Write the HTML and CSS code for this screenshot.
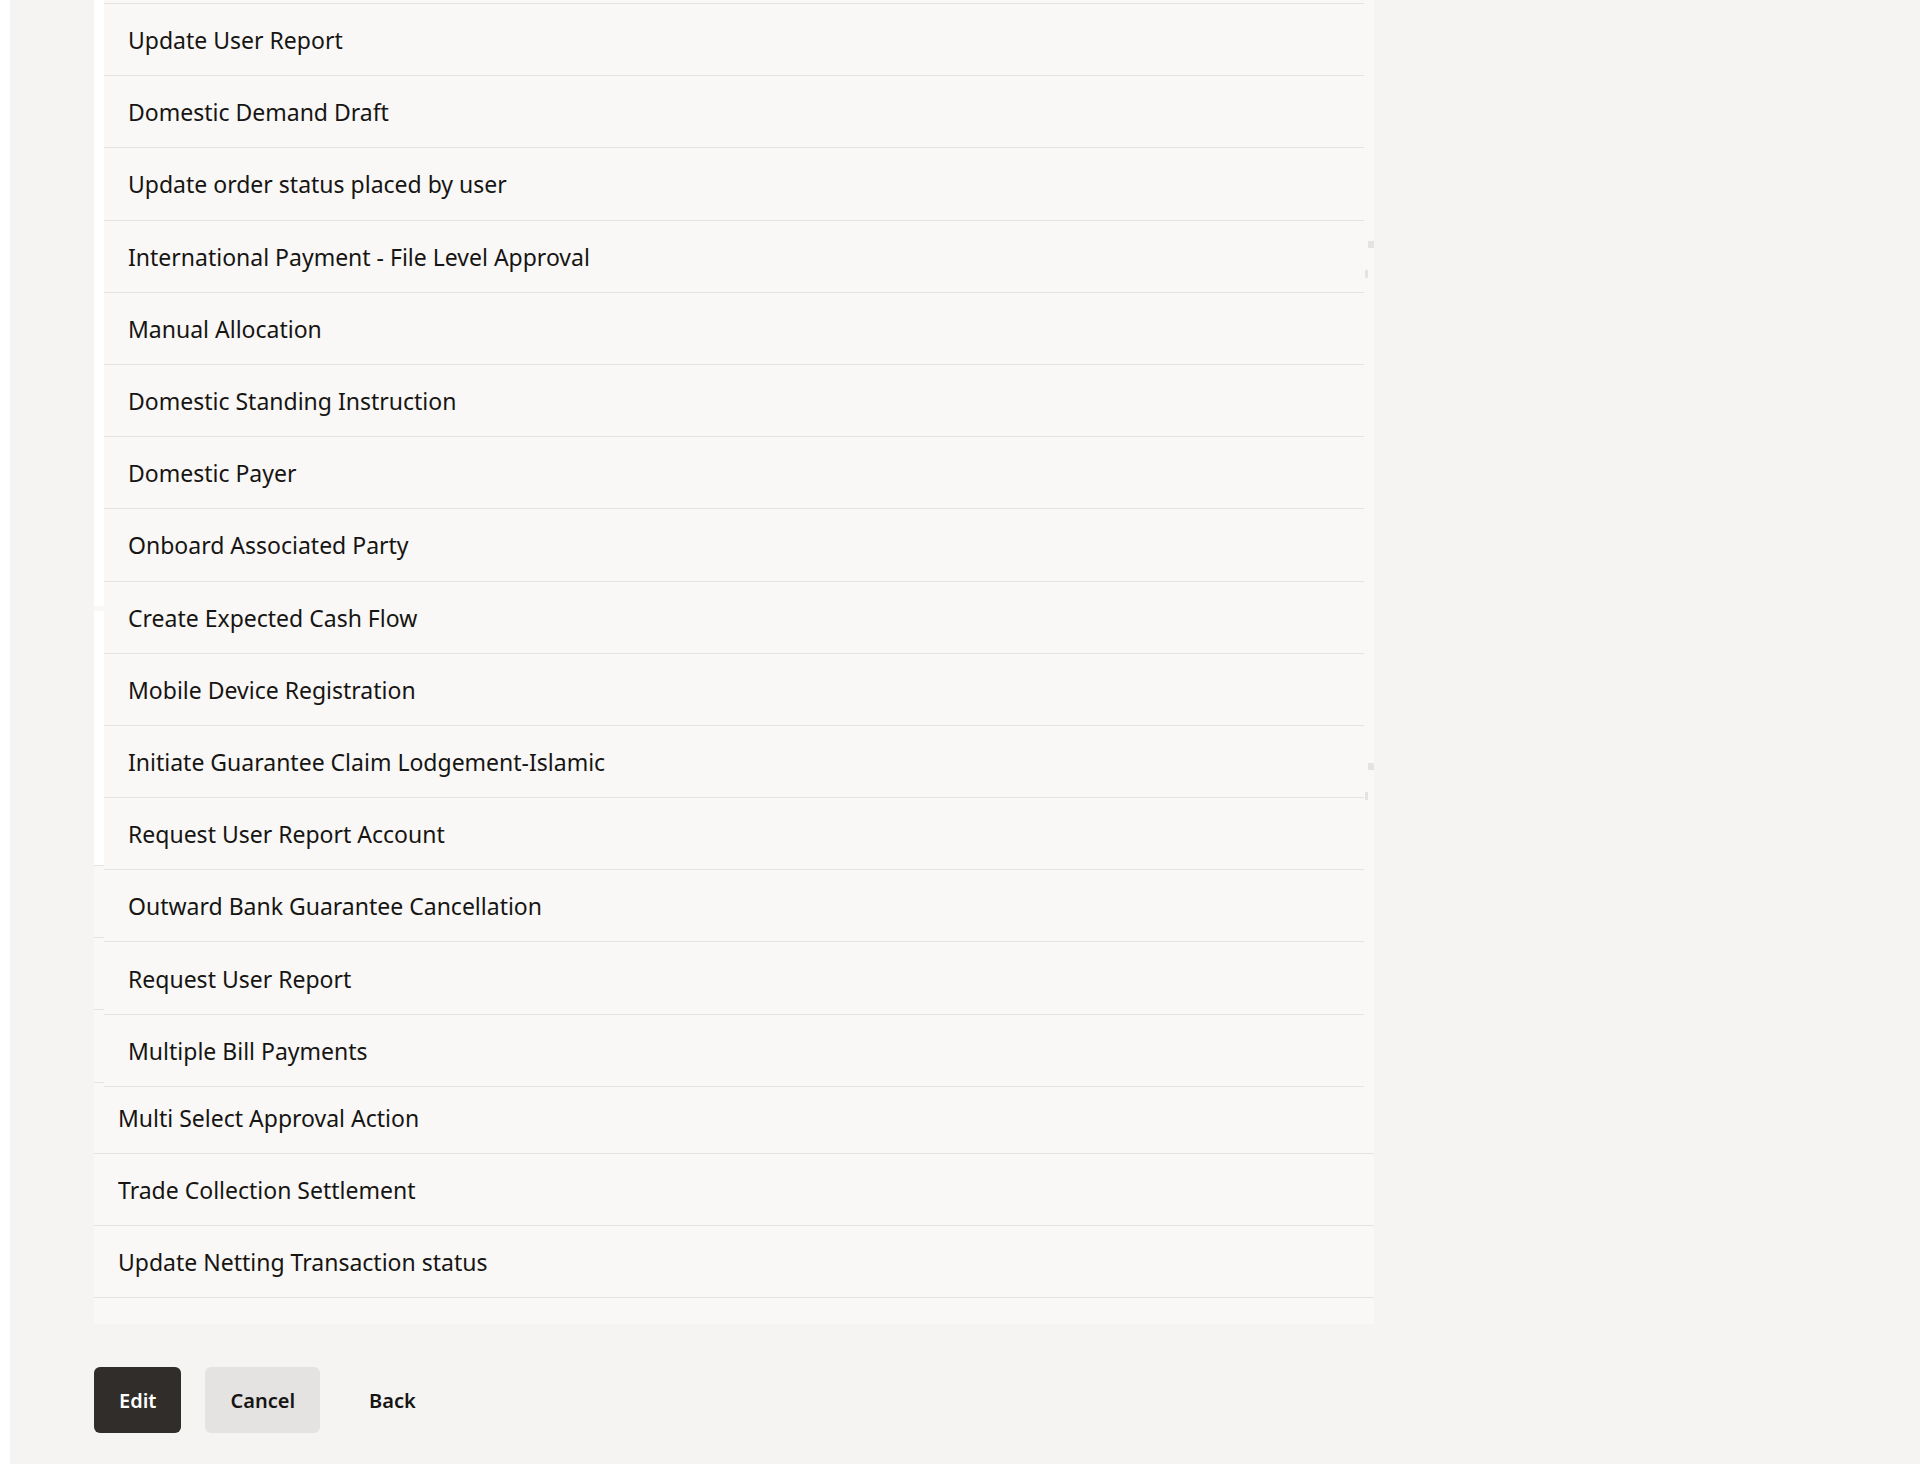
FILE: index.html
```html
<!DOCTYPE html>
<html>
<head>
  <meta name="viewport" content="width=device-width, initial-scale=1">
  <link rel="stylesheet" href="styles.css">
</head>
<body>

  <!-- Main content area -->
  <div class="page">

    <!-- Transaction list panel -->
    <div class="panel">

      <!-- Nested group of transactions -->
      <div class="group">
        <div class="gutter">
          <span class="gap-white g1"></span>
          <span class="gap-band"></span>
          <span class="gap-white g2"></span>
          <span class="gap-seg"></span>
          <span class="gap-seg"></span>
          <span class="gap-seg"></span>
          <span class="gap-seg last"></span>
        </div>

        <ul class="list">
          <li class="row-cut"></li>
          <li class="row">Update User Report</li>
          <li class="row">Domestic Demand Draft</li>
          <li class="row">Update order status placed by user</li>
          <li class="row">International Payment - File Level Approval</li>
          <li class="row">Manual Allocation</li>
          <li class="row">Domestic Standing Instruction</li>
          <li class="row">Domestic Payer</li>
          <li class="row">Onboard Associated Party</li>
          <li class="row">Create Expected Cash Flow</li>
          <li class="row">Mobile Device Registration</li>
          <li class="row">Initiate Guarantee Claim Lodgement-Islamic</li>
          <li class="row">Request User Report Account</li>
          <li class="row">Outward Bank Guarantee Cancellation</li>
          <li class="row">Request User Report</li>
          <li class="row">Multiple Bill Payments</li>
        </ul>

        <!-- scroll markers on the right edge -->
        <div class="rail">
          <span class="mark wide m1"></span>
          <span class="mark thin m2"></span>
          <span class="mark wide m3"></span>
          <span class="mark thin m2"></span>
        </div>
      </div>

      <!-- Top level transactions -->
      <ul class="list outer">
        <li class="row">Multi Select Approval Action</li>
        <li class="row">Trade Collection Settlement</li>
        <li class="row">Update Netting Transaction status</li>
      </ul>
    </div>

    <!-- Actions -->
    <div class="actions">
      <button class="btn btn-primary">Edit</button>
      <button class="btn btn-secondary">Cancel</button>
      <button class="btn btn-link">Back</button>
    </div>

  </div>

</body>
</html>
```

FILE: styles.css
```css
/* =====================
   BASE
   ===================== */
* {
  box-sizing: border-box;
}
body {
  margin: 0;
  background: #fff;
  font-family: "Noto Sans", "Open Sans", sans-serif;
  color: #161513;
}
ul {
  list-style: none;
  margin: 0;
  padding: 0;
}

/* =====================
   PAGE
   ===================== */
.page {
  margin-left: 10px;
  min-height: 100vh;
  padding-left: 84px;
  background: #f5f4f2;
}

.panel {
  width: 1280px;
  background: #f9f8f6;
  padding-bottom: 26px;
}

/* =====================
   NESTED GROUP
   ===================== */
.group {
  position: relative; /* sits above the top level list */
  display: flex;
  background: #f9f8f6;
}

.gutter {
  width: 10px;
  display: flex;
  flex-direction: column;
}
.gutter span {
  display: block;
}
.gap-white {
  background: #fff;
}
.g1 {
  height: 606px;
}
.gap-band {
  height: 5px;
}
.g2 {
  height: 254px;
}
.gap-seg {
  height: 72.2px;
  border-top: 1px solid #e5e3e0;
}
.gap-seg.last {
  height: 6px;
}

.list {
  flex: 1;
}

.row-cut {
  height: 4px;
  border-bottom: 1px solid #e5e3e0;
}

.row {
  height: 72.2px;
  display: flex;
  align-items: center;
  padding: 2px 0 0 24px;
  border-bottom: 1px solid #e5e3e0;
  font-size: 23px;
  line-height: 1;
}

.rail {
  width: 10px;
}
.mark {
  display: block;
  background: #e4e3e1;
}
.mark.wide {
  width: 6px;
  height: 7px;
  margin-left: 4px;
}
.mark.thin {
  width: 3px;
  height: 8px;
  margin-left: 1px;
}
.m1 {
  margin-top: 241px;
}
.m2 {
  margin-top: 22px;
}
.m3 {
  margin-top: 485px;
}

/* =====================
   TOP LEVEL ROWS
   ===================== */
.outer {
  margin-top: -6px; /* first row tucks under the group */
}

/* =====================
   BUTTONS
   ===================== */
.actions {
  display: flex;
  gap: 24px;
  padding-top: 43px;
}
.btn {
  height: 66px;
  padding: 0 25px;
  border: none;
  border-radius: 6px;
  font-family: "Noto Sans", "Open Sans", sans-serif;
  font-size: 20px;
  font-weight: 600;
  cursor: pointer;
}
.btn-primary {
  background: #312d2a;
  color: #fff;
}
.btn-secondary {
  background: #e4e3e1;
  color: #161513;
}
.btn-link {
  background: transparent;
  color: #161513;
}
```
